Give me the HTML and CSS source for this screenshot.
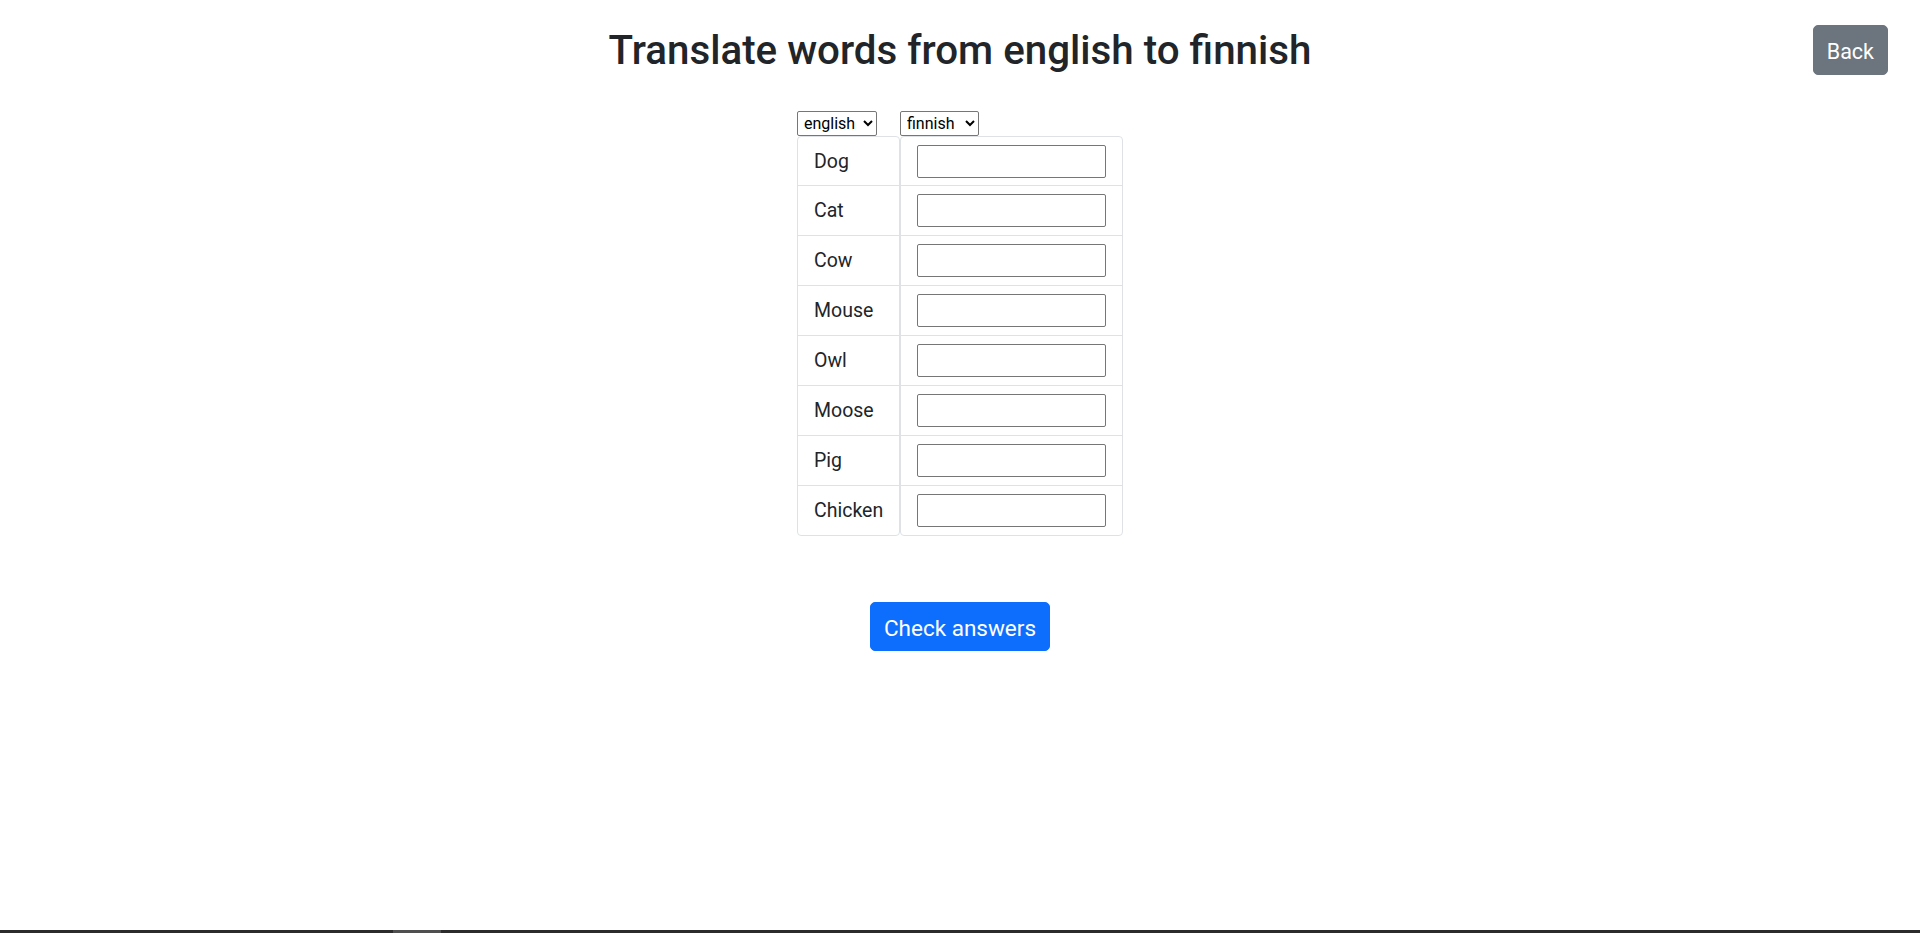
FILE: index.html
```html
<!DOCTYPE html>
<html lang="en">
<head>
<meta charset="utf-8">
<title>Translate words</title>
<link rel="stylesheet" href="styles.css">
</head>
<body>
<div class="page">
  <header class="topbar">
    <div class="spacer"></div>
    <h1 class="title">Translate words from english to finnish</h1>
    <div class="actions"><button class="btn btn-back" type="button">Back</button></div>
  </header>
  <main class="quiz">
    <div class="columns">
      <div class="col col-src">
        <select class="lang lang-src"><option>english</option><option>finnish</option></select>
        <ul class="list">
          <li class="item">Dog</li>
          <li class="item">Cat</li>
          <li class="item">Cow</li>
          <li class="item">Mouse</li>
          <li class="item">Owl</li>
          <li class="item">Moose</li>
          <li class="item">Pig</li>
          <li class="item">Chicken</li>
        </ul>
      </div>
      <div class="col col-dst">
        <select class="lang lang-dst"><option>finnish</option><option>english</option></select>
        <ul class="list">
          <li class="item"><input class="answer" type="text"></li>
          <li class="item"><input class="answer" type="text"></li>
          <li class="item"><input class="answer" type="text"></li>
          <li class="item"><input class="answer" type="text"></li>
          <li class="item"><input class="answer" type="text"></li>
          <li class="item"><input class="answer" type="text"></li>
          <li class="item"><input class="answer" type="text"></li>
          <li class="item"><input class="answer" type="text"></li>
        </ul>
      </div>
    </div>
    <button class="btn btn-check" type="button">Check answers</button>
  </main>
  <div class="scrollbar"><div class="thumb"></div></div>
</div>
</body>
</html>
```
FILE: styles.css
```css
* { box-sizing: border-box; }
html, body { margin: 0; padding: 0; }
body {
  font-family: Roboto, "Liberation Sans", sans-serif;
  color: #212529;
  background: #fff;
}
.page {
  min-height: 100vh;
  display: flex;
  flex-direction: column;
}
.topbar {
  display: grid;
  grid-template-columns: 1fr auto 1fr;
  align-items: start;
  padding: 25px 32px 0;
}
.title {
  margin: 0;
  font-size: 40.3px;
  font-weight: 500;
  line-height: 52px;
  text-align: center;
  color: #212529;
}
.actions {
  display: flex;
  justify-content: flex-end;
}
.btn {
  font-family: Roboto, "Liberation Sans", sans-serif;
  color: #fff;
  border: 1px solid transparent;
  border-radius: 5px;
  cursor: pointer;
}
.btn-back {
  background: #6c757d;
  border-color: #6c757d;
  font-size: 21.5px;
  line-height: 30px;
  height: 50px;
  padding: 11px 13px 7px;
}
.quiz {
  flex: 1;
  display: flex;
  flex-direction: column;
  align-items: center;
  padding-top: 34px;
}
.columns {
  display: flex;
  align-items: flex-start;
}
.col {
  display: flex;
  flex-direction: column;
  align-items: flex-start;
}
.col-src { width: 103px; }
.col-dst { width: 223px; }
.lang {
  font-family: Roboto, "Liberation Sans", sans-serif;
  font-size: 16px;
  height: 25px;
  color: #000;
  background: #fff;
  border: 1px solid #767676;
  border-radius: 2px;
  padding: 0 0 0 2px;
}
.lang-src { width: 80px; }
.lang-dst { width: 79px; }
.list {
  list-style: none;
  margin: 0;
  padding: 0;
  width: 100%;
  border: 1px solid #dee2e6;
  border-radius: 4px;
}
.item {
  display: flex;
  align-items: center;
  height: 50px;
  padding: 0 16px;
  border-top: 1px solid #dee2e6;
  font-size: 19.5px;
  color: #212529;
}
.item:first-child {
  border-top: 0;
  height: 48px;
}
.answer {
  width: 189px;
  height: 33px;
  border: 1px solid #767676;
  border-radius: 2px;
  background: #fff;
  font-family: Roboto, "Liberation Sans", sans-serif;
  font-size: 19.5px;
  padding: 1px 4px;
}
.btn-check {
  margin-top: 66px;
  background: #0d6efd;
  border-color: #0d6efd;
  font-size: 22.5px;
  line-height: 31px;
  height: 49px;
  padding: 10px 13px 6px;
}
.scrollbar {
  height: 3px;
  background: #2b2b2b;
  display: flex;
}
.thumb {
  margin-left: 393px;
  width: 48px;
  background: #4f4f4f;
}
```
